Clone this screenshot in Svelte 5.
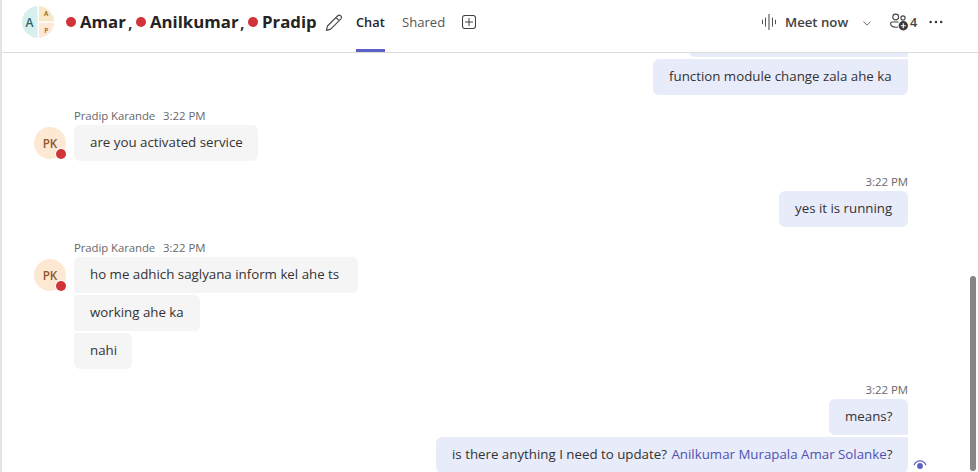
<script>
  const people = [
    { name: 'Amar', width: 48 },
    { name: 'Anilkumar', width: 90 },
    { name: 'Pradip', width: 55 }
  ];
  const groups = [
    { mine: true, meta: false, messages: [
      { text: '', width: 219 },
      { text: 'function module change zala ahe ka', width: 255 }
    ] },
    { mine: false, meta: true, messages: [{ text: 'are you activated service', width: 184 }] },
    { mine: true, meta: true, messages: [{ text: 'yes it is running', width: 129 }] },
    { mine: false, meta: true, messages: [
      { text: 'ho me adhich saglyana inform kel ahe ts', width: 284 },
      { text: 'working ahe ka', width: 126 },
      { text: 'nahi', width: 58 }
    ] },
    { mine: true, meta: true, messages: [
      { text: 'means?', width: 79 },
      { text: 'is there anything I need to update? ', mention: 'Anilkumar Murapala Amar Solanke', end: '?', width: 472, seen: true }
    ] }
  ];
</script>

<div class="app">
  <header>
    <svg class="group" width="32" height="32" viewBox="0 0 32 32">
      <defs><clipPath id="round"><circle cx="16" cy="16" r="16" /></clipPath></defs>
      <g clip-path="url(#round)">
        <rect width="15.5" height="32" fill="#d8eff0" />
        <rect x="17" width="15" height="15.3" fill="#f8e8c8" />
        <rect x="17" y="16.8" width="15" height="15.2" fill="#fde7d5" />
      </g>
      <text x="3.6" y="20.5" font-size="12" fill="#2b666b">A</text>
      <text x="22" y="10.3" font-size="6.5" fill="#8a5d12">A</text>
      <text x="22.3" y="26.6" font-size="6.5" fill="#9a5a28">P</text>
    </svg>
    <div class="people">
      {#each people as person, i}
        <i class="dot"></i><b style="width: {person.width}px">{person.name}</b>{#if i < 2}<span class="comma">,</span>{/if}
      {/each}
    </div>
    <svg class="pencil" width="18" height="18" viewBox="0 0 18 18" fill="none" stroke="#484848" stroke-width="1.1" stroke-linejoin="round">
      <path d="M1.4 16.4 2.5 12 12.5 2C15 -.1 17.8 2.7 15.7 5.1L5.7 15.1Z M11 3.5 14.2 6.7" />
    </svg>
    <nav>
      <span class="tab active">Chat</span>
      <span class="tab">Shared</span>
      <svg width="14" height="14" viewBox="0 0 14 14" fill="none" stroke="#424242">
        <rect x=".5" y=".5" width="13" height="13" rx="2.4" stroke-width="1.1" /><path d="M7 3v8M3 7h8" />
      </svg>
    </nav>
    <div class="actions">
      <svg class="wave" width="15" height="16" viewBox="0 0 15 16">
        <path d="M.5 6.2v3.6M3.5 4v8.2M10.5 4v8.2M13.5 6.2v3.6" stroke="#505050" stroke-linecap="round" />
        <path d="M7 0v16" stroke="#a0a0a0" stroke-width="2" />
      </svg>
      <span class="meet">Meet now</span>
      <svg class="chev" width="8" height="5" viewBox="0 0 8 5" fill="none" stroke="#707070"><path d="m.4.6 3.6 3.5L7.6.6" /></svg>
      <svg class="members" width="18" height="18" viewBox="0 0 18 18" fill="none" stroke="#424242" stroke-width="1.1">
        <circle cx="5.7" cy="4" r="2.9" /><circle cx="13" cy="5" r="2.1" />
        <path d="M8.5 9H2.3C1.2 9 .6 9.6.6 10.6c0 2.4 2.1 3.6 5 3.6 1 0 1.7-.1 2.3-.3" />
        <circle cx="13.3" cy="12.8" r="4.7" fill="#383838" stroke="none" /><path d="M13.3 10.3v5M10.8 12.8h5" stroke="#fff" />
      </svg>
      <span class="count">4</span>
      <svg class="more" width="14" height="4" viewBox="0 0 14 4" fill="#383838"><circle cx="1.6" cy="2" r="1.25" /><circle cx="7" cy="2" r="1.25" /><circle cx="12.2" cy="2" r="1.25" /></svg>
    </div>
  </header>

  <main>
    <div class="thread">
      {#each groups as group}
        <section class:mine={group.mine}>
          {#if !group.mine}
            <div class="avatar">PK<i></i></div>
          {/if}
          <div class="stack">
            {#if group.meta}
              <div class="meta">{#if !group.mine}<span class="who">Pradip Karande</span>{/if}<span>3:22 PM</span></div>
            {/if}
            {#each group.messages as m}
              <div class="bubble" style="width: {m.width}px">{m.text}{#if m.mention}<span class="mention">{m.mention}</span>{m.end}{/if}
                {#if m.seen}
                  <svg class="seen" width="14" height="10" viewBox="0 0 14 10"><path d="M1 5.2C2.3 2.1 4.4.9 7 .9s4.7 1.2 6 4.3" fill="none" stroke="#5b5fc7" stroke-width="1.1" /><circle cx="7" cy="6" r="2.9" fill="#5b5fc7" /></svg>
                {/if}
              </div>
            {/each}
          </div>
        </section>
      {/each}
    </div>
    <div class="scroll"></div>
  </main>
</div>

<style>
  :global(body) { background: #fff; overflow: hidden; }
  .app {
    box-sizing: border-box;
    width: 978px;
    height: 472px;
    overflow: hidden;
    display: flex;
    flex-direction: column;
    border-left: 2px solid #e3e3e3;
    font-family: 'Open Sans', 'Noto Sans', sans-serif;
    color: #242424;
    white-space: nowrap;
  }
  svg { display: block; flex: none; }
  header {
    box-sizing: border-box;
    height: 53px;
    flex: none;
    display: flex;
    align-items: flex-start;
    border-bottom: 1px solid #dcdcdc;
    padding-left: 20px;
  }
  .group { margin-top: 6px; font-weight: 600; }
  .people { display: flex; align-items: center; height: 44px; margin-left: 12px; font-size: 16.8px; }
  .dot { width: 10px; height: 10px; border-radius: 50%; background: #d13438; }
  .people b { margin-left: 4px; line-height: 24px; }
  .comma { width: 8px; font-weight: 600; }
  .pencil { margin: 14px 0 0 8px; }
  nav { display: flex; height: 52px; margin-left: 13px; }
  .tab { box-sizing: border-box; height: 52px; line-height: 44px; font-size: 13.1px; color: #555; margin-right: 17px; }
  .tab.active { width: 29px; font-size: 12.8px; font-weight: 600; color: #242424; background: linear-gradient(#5b5fc7, #5b5fc7) 0 100% / 100% 3px no-repeat; }
  nav svg { margin-top: 15px; }
  .actions { display: flex; margin-left: auto; align-items: center; height: 44px; }
  .meet { margin-left: 8px; width: 64px; font-size: 13.2px; font-weight: 600; color: #424242; }
  .chev { margin: 2px 0 0 14px; }
  .members { margin-left: 19px; }
  .count { width: 8px; margin-left: 2px; font-size: 12.5px; font-weight: 600; color: #424242; }
  .more { margin: 0 35px 0 11px; }

  main { flex: 1; min-height: 0; display: flex; justify-content: space-between; }
  .thread { width: 906px; display: flex; flex-direction: column; gap: 13px; margin-top: -32px; clip-path: inset(32px -40px 0 0); }
  section { display: flex; flex: none; padding-left: 32px; }
  .avatar {
    position: relative;
    width: 32px;
    height: 32px;
    margin: 19px 8px 0 0;
    border-radius: 50%;
    background: #fde8d4;
    color: #8e562e;
    font-size: 11.7px;
    font-weight: 600;
    line-height: 32px;
    text-align: center;
  }
  .avatar i { position: absolute; right: 0; bottom: 0; width: 10px; height: 10px; border-radius: 50%; background: #d13438; box-shadow: 0 0 0 1px #fff; }
  .stack { flex: 1; display: flex; flex-direction: column; align-items: flex-start; gap: 2px; }
  .meta { display: flex; gap: 8px; height: 15px; line-height: 15px; font-size: 11.4px; color: #686868; }
  .who { width: 81px; letter-spacing: -0.08px; }
  .bubble {
    position: relative;
    box-sizing: border-box;
    height: 36px;
    padding-left: 16px;
    border-radius: 2px 6px 6px 2px;
    background: #f5f5f5;
    font-size: 13.3px;
    line-height: 35px;
    color: #333;
  }
  .stack > .bubble:nth-child(2) { border-top-left-radius: 6px; }
  .stack > .bubble:last-child { border-bottom-left-radius: 6px; }
  .mine .stack { align-items: flex-end; }
  .mine .bubble, .mine .stack > .bubble { background: #e8ebfa; border-radius: 6px 1px 1px 6px; }
  .mine .stack > .bubble:nth-child(2) { border-top-right-radius: 6px; }
  .mine .stack > .bubble:first-child + .bubble { border-top-right-radius: 1px; }
  .mine .stack > .bubble:last-child { border-bottom-right-radius: 6px; }
  .mention { margin-left: 1px; color: #4f52b2; }
  .seen { position: absolute; right: -19px; top: 23px; }
  .scroll { width: 6px; height: 195px; align-self: flex-end; margin: 0 2px 1px 0; border-radius: 3px; background: #858585; }
</style>
